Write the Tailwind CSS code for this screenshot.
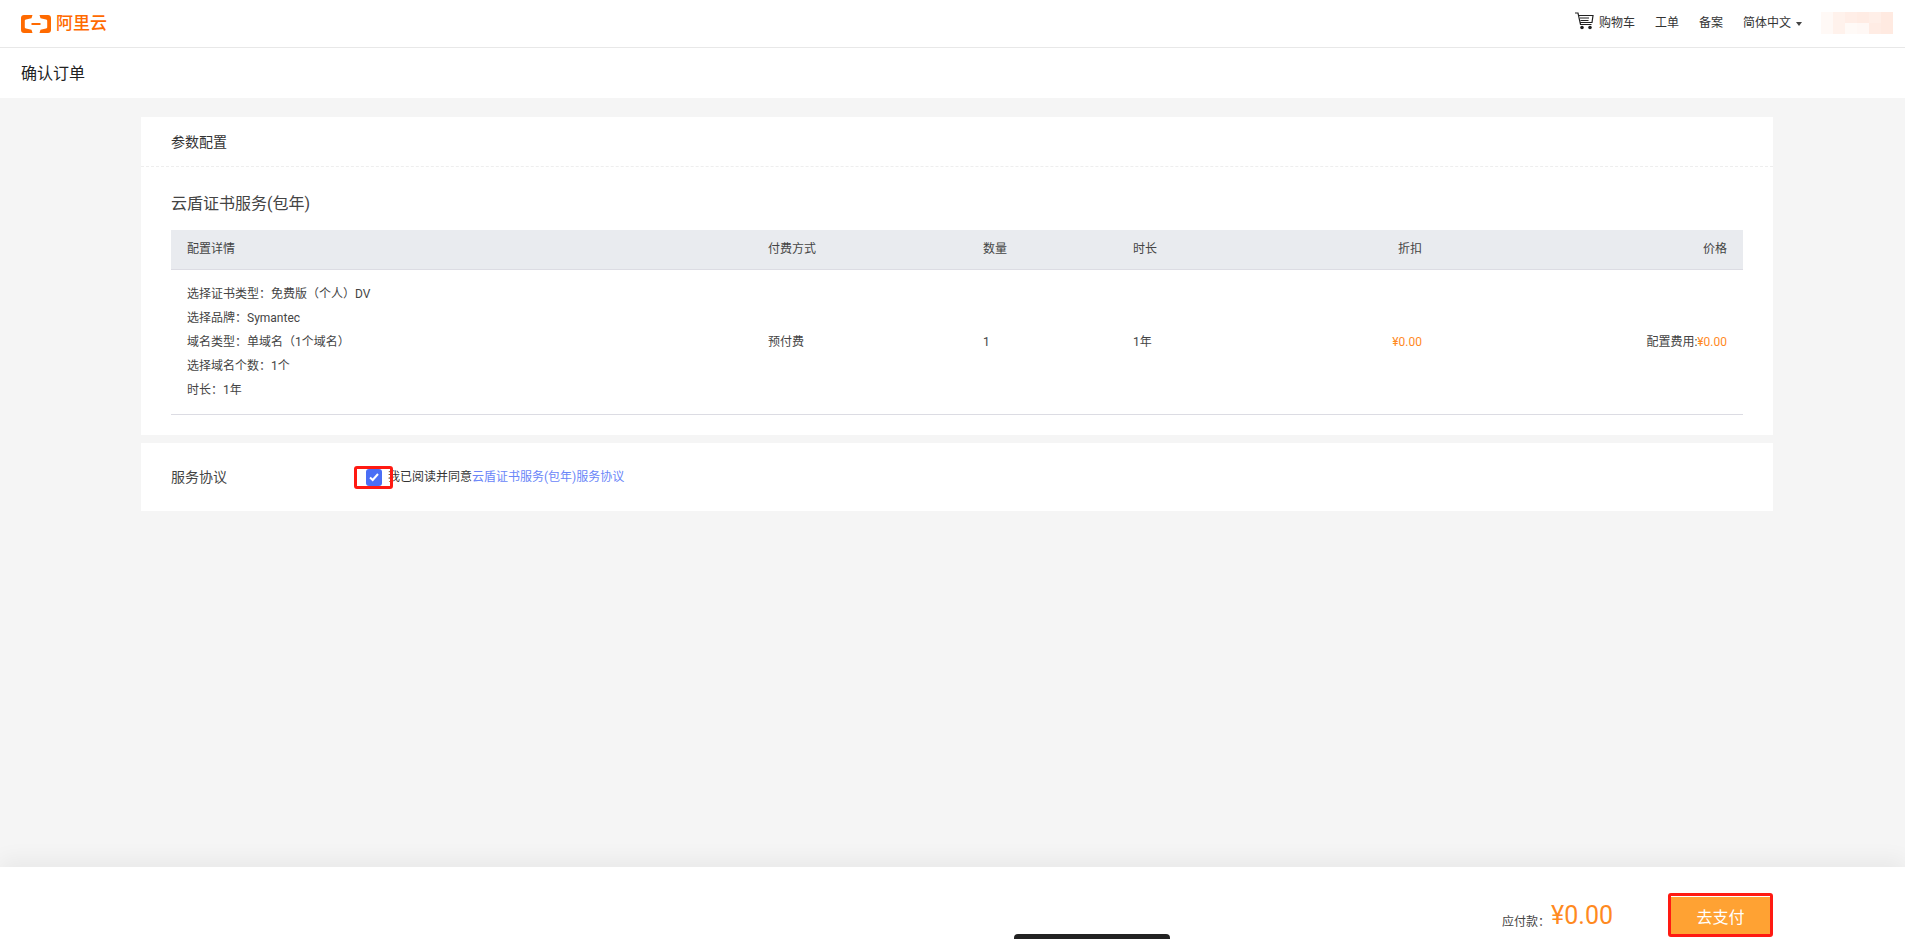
<!DOCTYPE html>
<html lang="zh-CN">

<head>
    <meta charset="UTF-8">
    <meta name="viewport" content="width=device-width, initial-scale=1.0">
    <script src="https://cdn.jsdelivr.net/npm/@tailwindcss/browser@4"></script>
    <title>确认订单</title>
</head>

<body class="h-screen overflow-hidden flex flex-col bg-[#f5f5f5] text-[#333] text-xs font-['Roboto','Noto_Sans_CJK_SC',sans-serif]">
    <!-- top nav -->
    <header class="h-[48px] shrink-0 flex items-center bg-white border-b border-[#e8e8e8] pl-[21px] pr-[12px]">
        <div class="flex items-center text-[#ff6a00]">
            <svg class="w-[30px] h-[18px]" viewBox="0 0 30 18" fill="currentColor">
                <path d="M3 0h8.500L10.500 3.300 5 4.500C4 4.800 3.800 5.200 3.800 6v6c0 .8.200 1.200 1.200 1.500l5.500 1.200 1 3.300H3C1.200 18 0 16.800 0 15V3C0 1.200 1.200 0 3 0z" />
                <path d="M27 0h-8.500l1 3.300 5.500 1.200c1 .3 1.200.7 1.200 1.500v6c0 .8-.2 1.200-1.200 1.500l-5.500 1.200-1 3.300H27c1.800 0 3-1.200 3-3V3c0-1.800-1.200-3-3-3z" />
                <rect x="10.500" y="8" width="9" height="2" />
            </svg>
            <span class="ml-[5px] text-[17px] leading-none font-medium">阿里云</span>
        </div>

        <nav class="ml-auto flex items-center">
            <svg class="w-[19px] h-[18px] mr-[5px] -mt-[5px] text-[#222]" viewBox="0 0 19 18" fill="none" stroke="currentColor" stroke-width="1.200">
                <path d="M0 1h3l2.500 11.500h11" />
                <path d="M3.500 3.500H18l-1 7H5" />
                <path d="M5 6h9M5.500 8.500h8" stroke-width="1" />
                <circle cx="7" cy="15.500" r="1.200" fill="currentColor" />
                <circle cx="15" cy="15.500" r="1.200" fill="currentColor" />
            </svg>
            <a class="-mt-[2px] text-[#333]">购物车</a>
            <a class="-mt-[2px] ml-[20px] text-[#333]">工单</a>
            <a class="-mt-[2px] ml-[20px] text-[#333]">备案</a>
            <a class="-mt-[2px] ml-[20px] text-[#333]">简体中文</a>
            <span class="ml-[5px] border-x-[3.500px] border-x-transparent border-t-[4px] border-t-[#444]"></span>
            <!-- blurred account name -->
            <div class="ml-[19px] w-[72px] h-[22px] -mt-[2px] grid grid-cols-6 grid-rows-2">
                <div class="row-span-2 bg-[#fff9f6]"></div>
                <div class="row-span-2 bg-[#fff2ec]"></div>
                <div class="bg-[#ffeee7]"></div>
                <div class="bg-[#ffece4]"></div>
                <div class="bg-[#ffefe8]"></div>
                <div class="row-span-2 bg-[#ffeae1]"></div>
                <div class="bg-[#fffaf7]"></div>
                <div class="bg-[#fff8f5]"></div>
                <div class="bg-[#ffece4]"></div>
            </div>
        </nav>
    </header>

    <div class="h-[50px] shrink-0 flex items-center bg-white pl-[21px] pt-[2px] text-base text-[#222]">确认订单</div>

    <main class="flex-1 pt-[19px]">
        <div class="w-[1632px] ml-[141px] flex flex-col gap-[8px]">
            <section class="bg-white h-[318px]">
                <div class="h-[50px] flex items-center px-[30px] border-b border-dashed border-[#eeeeee] text-sm">参数配置</div>
                <div class="px-[30px]">
                    <h2 class="h-[63px] pt-[10px] flex items-center text-base font-normal text-[#444]">云盾证书服务(包年)</h2>
                    <table class="w-full table-fixed text-[#444]">
                        <thead>
                            <tr class="h-[39px] bg-[#e9ebef] border-b border-[#dcdce3]">
                                <th class="w-[581px] px-4 text-left font-normal">配置详情</th>
                                <th class="w-[215px] px-4 text-left font-normal">付费方式</th>
                                <th class="w-[150px] px-4 text-left font-normal">数量</th>
                                <th class="w-[150px] px-4 text-left font-normal">时长</th>
                                <th class="w-[171px] px-4 text-right font-normal">折扣</th>
                                <th class="px-4 text-right font-normal">价格</th>
                            </tr>
                        </thead>
                        <tbody>
                            <tr class="border-b border-[#dcdce3]">
                                <td class="px-4 pt-[12px] pb-[12px] leading-[24px]">
                                    <p>选择证书类型：免费版（个人）DV</p>
                                    <p>选择品牌：Symantec</p>
                                    <p>域名类型：单域名（1个域名）</p>
                                    <p>选择域名个数：1个</p>
                                    <p>时长：1年</p>
                                </td>
                                <td class="px-4">预付费</td>
                                <td class="px-4">1</td>
                                <td class="px-4">1年</td>
                                <td class="px-4 text-right text-[#ff8a1f]">¥0.00</td>
                                <td class="px-4 text-right">配置费用:<span class="text-[#ff8a1f]">¥0.00</span></td>
                            </tr>
                        </tbody>
                    </table>
                </div>
            </section>

            <section class="bg-white h-[68px] flex items-center px-[30px]">
                <div class="w-[195px] text-sm text-[#444]">服务协议</div>
                <div class="relative w-[16px] h-[17px] rounded-[3px] bg-[#4a6ef5] flex items-center justify-center">
                    <svg class="w-[10px] h-[10px]" viewBox="0 0 10 10" fill="none" stroke="white" stroke-width="2">
                        <path d="M1 5.500l2.700 2.500L9 2" />
                    </svg>
                    <div class="absolute -left-[12px] -top-[3px] w-[39px] h-[23px] border-[3px] border-[#ff1a12] rounded-[3px]"></div>
                </div>
                <span class="ml-[6px]">我已阅读并同意<a class="text-[#6a86f8]">云盾证书服务(包年)服务协议</a></span>
            </section>
        </div>
    </main>

    <footer class="relative h-[72px] shrink-0 bg-white shadow-[0_-8px_20px_rgba(0,0,0,0.05)] flex justify-end pr-[132px] pt-[26px]">
        <div class="flex items-end h-[40px] pb-[2px]">
            <span class="text-[#444] mb-[1px]">应付款：</span>
            <span class="ml-[1px] text-[25px] leading-[30px] text-[#ff8a1f]">¥0.00</span>
        </div>
        <button class="ml-[55px] w-[105px] h-[44px] border-[3px] border-[#ff1a12] rounded-[3px] bg-[#ffa233] text-base text-white pt-[5px] shadow-[inset_0_1px_0_white]">去支付</button>
        <div class="absolute left-[1014px] bottom-0 w-[156px] h-[5px] bg-[#222] rounded-t-[4px]"></div>
    </footer>
</body>

</html>
